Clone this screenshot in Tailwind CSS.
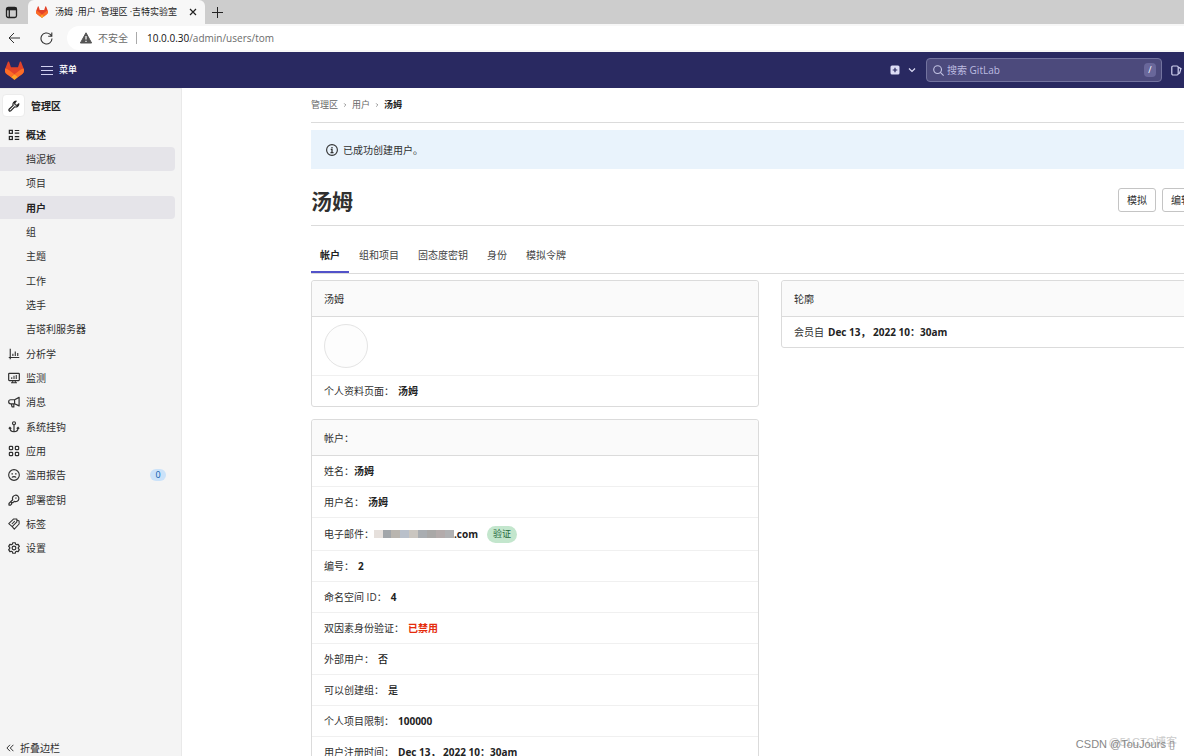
<!DOCTYPE html>
<html lang="zh-CN">
<head>
<meta charset="utf-8">
<meta name="viewport" content="width=device-width, initial-scale=1">
<title>汤姆 ·用户 ·管理区 ·吉特实验室</title>
<script src="https://cdn.jsdelivr.net/npm/@tailwindcss/browser@4"></script>
</head>
<body class="relative flex h-screen flex-col overflow-hidden bg-white font-['Open_Sans','Noto_Sans_CJK_SC',sans-serif] text-[10px] leading-4 text-[#303030]">

<svg class="hidden" aria-hidden="true">
  <symbol id="tanuki" viewBox="0 0 25 24">
    <path d="m24.507 9.5-.034-.09L21.082.562a.896.896 0 0 0-1.694.091l-2.29 7.01H7.825L5.535.653a.898.898 0 0 0-1.694-.09L.451 9.411.416 9.5a6.297 6.297 0 0 0 2.09 7.278l.012.01.03.022 5.16 3.867 2.56 1.935 1.554 1.176a1.051 1.051 0 0 0 1.268 0l1.555-1.176 2.56-1.935 5.197-3.89.014-.01A6.297 6.297 0 0 0 24.507 9.5Z" fill="#E24329"/>
    <path d="m24.507 9.5-.034-.09a11.44 11.44 0 0 0-4.56 2.051l-7.447 5.632 4.742 3.584 5.197-3.89.014-.01A6.297 6.297 0 0 0 24.507 9.5Z" fill="#FC6D26"/>
    <path d="m7.707 20.677 2.56 1.935 1.555 1.176a1.051 1.051 0 0 0 1.268 0l1.555-1.176 2.56-1.935-4.743-3.584-4.755 3.584Z" fill="#FCA326"/>
    <path d="M5.01 11.461a11.43 11.43 0 0 0-4.56-2.05L.416 9.5a6.297 6.297 0 0 0 2.09 7.278l.012.01.03.022 5.16 3.867 4.745-3.584-7.444-5.632Z" fill="#FC6D26"/>
  </symbol>
</svg>

<!-- Browser tabs -->
<div class="flex h-6 shrink-0 items-stretch bg-[#cdcdcd]">
  <button aria-label="标签操作" class="flex w-7 items-center pl-[5px] text-[#222]">
    <svg class="size-[13px]" viewBox="0 0 13 13" fill="none" stroke="currentColor" stroke-width="1.3"><rect x="1.5" y="1.5" width="10" height="10" rx="1.8"/><path d="M1.5 3h10" stroke-width="2.6"/><path d="M4.3 3v8.5"/></svg>
  </button>
  <div class="flex w-[177px] items-center rounded-t-md bg-[#f7f7f7] pl-2 pr-2 text-[9px] text-[#1a1a1a]">
    <svg class="size-3 shrink-0"><use href="#tanuki"/></svg>
    <span class="ml-[7px] flex-1 whitespace-nowrap">汤姆 ·用户 ·管理区 ·吉特实验室</span>
    <button aria-label="关闭标签"><svg class="size-2" viewBox="0 0 8 8" fill="none" stroke="#222" stroke-width="1.2"><path d="M1 1l6 6M7 1L1 7"/></svg></button>
  </div>
  <button aria-label="新建标签" class="flex items-center pl-[7px]"><svg class="size-[11px]" viewBox="0 0 11 11" fill="none" stroke="#222"><path d="M5.5 0v11M0 5.5h11"/></svg></button>
</div>

<!-- Address bar -->
<div class="flex h-7 shrink-0 items-center bg-[#f7f7f7] pl-2">
  <button aria-label="后退"><svg class="size-3" viewBox="0 0 12 12" fill="none" stroke="#333"><path d="M12 6H1M6 1L1 6l5 5"/></svg></button>
  <button aria-label="刷新" class="ml-5"><svg class="size-[13px]" viewBox="0 0 13 13" fill="none" stroke="#333" stroke-width="1.1"><path d="M12 6.5a5.5 5.5 0 1 1-1.8-4.1L11.6 4M11.8.5v3.7H8.2"/></svg></button>
  <div class="ml-[14px] flex h-6 flex-1 items-center rounded-l-full bg-white pl-[13px] text-[#6b6b6b]">
    <svg class="size-3" viewBox="0 0 12 12"><path d="M6 .8 11.6 11H.4z" fill="#555" stroke="#555" stroke-linejoin="round"/><path d="M6 4v3.6M6 8.7v1.2" stroke="#fff" stroke-width="1.2"/></svg>
    <span class="ml-1.5">不安全</span>
    <span class="mx-2 h-3 w-px bg-[#aaa]"></span>
    <div role="textbox" aria-label="地址" class="ml-0.5 text-[10px]"><span class="text-[#111]">10.0.0.30</span>/admin/users/tom</div>
  </div>
</div>

<!-- GitLab top bar -->
<header class="flex h-9 shrink-0 items-center overflow-hidden bg-[#292961] pl-[5px] text-[#d1d1f0]">
  <a href="#" aria-label="GitLab"><svg class="size-[19px]"><use href="#tanuki"/></svg></a>
  <button class="ml-[17px] flex items-center gap-1.5 font-medium text-white">
    <svg class="size-3" viewBox="0 0 12 12" stroke="#d1d1f0" fill="none"><path d="M0 2.5h12M0 6.5h12M0 10.5h12" stroke-width="1.1"/></svg>
    <span class="text-[9px]">菜单</span>
  </button>
  <button aria-label="新建" class="ml-auto flex items-center gap-2">
    <svg class="size-[10px]" viewBox="0 0 10 10"><rect x=".5" y=".5" width="9" height="9" rx="1.5" fill="#dcdcf5"/><path d="M5 2.7v4.6M2.7 5h4.6" stroke="#292961" stroke-width="1.2"/></svg>
    <svg class="size-2" viewBox="0 0 8 8" fill="none" stroke="#dcdcf5" stroke-width="1.2"><path d="M1 2.5l3 3 3-3"/></svg>
  </button>
  <div class="ml-[10px] flex h-6 w-[236px] items-center rounded border border-[#73739f] bg-[#4c4a7c] pl-1.5 pr-[5px]">
    <svg class="size-[11px] shrink-0" viewBox="0 0 11 11" fill="none" stroke="#c4c4e4" stroke-width="1.1"><circle cx="4.6" cy="4.6" r="3.9"/><path d="M7.4 7.4l3.2 3.2"/></svg>
    <input type="search" aria-label="搜索 GitLab" placeholder="搜索 GitLab" class="ml-[3px] h-5 min-w-0 flex-1 bg-transparent outline-none placeholder:text-[#bcbce0]">
    <kbd class="flex h-[14px] w-3 items-center justify-center rounded-sm bg-[#69679a] font-['Open_Sans',sans-serif] text-[9px] text-white">/</kbd>
  </div>
  <button aria-label="议题" class="ml-[9px] mr-[2px]"><svg class="size-[11px]" viewBox="0 0 11 11" fill="none" stroke="#d1d1f0" stroke-width="1.2"><rect x=".8" y="1" width="6.4" height="9" rx="1.2"/><path d="M7.4 2.2 10 3.6 8.6 8.2 7.4 8.8"/></svg></button>
</header>

<div class="flex min-h-0 flex-1 overflow-hidden">
  <!-- Sidebar -->
  <nav aria-label="管理区" class="flex w-[182px] shrink-0 flex-col overflow-hidden border-r border-t border-[#e9e9e9] bg-[#f4f4f4]">
    <a href="#" class="mt-[5px] ml-[2px] flex items-center gap-[6px] font-semibold text-[#222]">
      <span class="flex size-[23px] items-center justify-center rounded border border-[#ececec] bg-white">
        <svg class="size-3" viewBox="0 0 16 16" fill="none" stroke="currentColor" stroke-width="1.6" stroke-linejoin="round"><path d="M10.9 1.500A4.300 4.300 0 0 0 6.900 7.200L1.500 12.400a1.500 1.500 0 0 0 2.100 2.100L8.800 9.100a4.300 4.300 0 0 0 5.700-4L12 7.200 9.600 6.400 8.800 4z"/></svg>
      </span>管理区</a>
    <ul class="mt-[6px] grid h-[437px] shrink-0 auto-rows-fr gap-px pr-[6px] [&_a]:flex [&_a]:h-full [&_a]:items-center [&_a]:rounded-r [&_svg]:mr-[6px] [&_svg]:size-3 [&_svg]:shrink-0">
      <li><a href="#" class="pl-2 font-semibold text-[#222]"><svg viewBox="0 0 16 16" fill="none" stroke="currentColor" stroke-width="1.6"><rect x="1.8" y="1.8" width="4" height="4"/><rect x="1.8" y="10" width="4" height="4"/><path d="M9 2h6M9 5.6h6M9 10.2h6M9 13.8h6"/></svg>概述</a></li>
      <li><a href="#" class="bg-[#e5e4e9] pl-[26px]">挡泥板</a></li>
      <li><a href="#" class="pl-[26px]">项目</a></li>
      <li><a href="#" aria-current="page" class="bg-[#e5e4e9] pl-[26px] font-semibold text-[#222]">用户</a></li>
      <li><a href="#" class="pl-[26px]">组</a></li>
      <li><a href="#" class="pl-[26px]">主题</a></li>
      <li><a href="#" class="pl-[26px]">工作</a></li>
      <li><a href="#" class="pl-[26px]">选手</a></li>
      <li><a href="#" class="pl-[26px]">吉塔利服务器</a></li>
      <li><a href="#" class="pl-2"><svg viewBox="0 0 16 16" fill="none" stroke="currentColor" stroke-width="1.5"><path d="M3 1v14M1 12.6h14M6.5 7.5v3.2M9.7 4.5v6.2M13 6.5v4.2"/></svg>分析学</a></li>
      <li><a href="#" class="pl-2"><svg viewBox="0 0 16 16" fill="none" stroke="currentColor" stroke-width="1.6"><rect x=".9" y="1.8" width="14.2" height="9.6" rx="1"/><path d="M6.3 11.4v3M9.7 11.4v3M4 14.4h8M5 7v2.4M8 5v4.4M11 4v5.4" stroke-width="1.4"/></svg>监测</a></li>
      <li><a href="#" class="pl-2"><svg viewBox="0 0 16 16" fill="none" stroke="currentColor" stroke-width="1.6" stroke-linejoin="round"><path d="M14.8 1.8v11.4L8.8 10.4H3.6a2.6 2.6 0 0 1 0-5.4h5.2zM8.8 5v5.4M4.4 10.4l1 4.2h2.4V10.4"/></svg>消息</a></li>
      <li><a href="#" class="pl-2"><svg viewBox="0 0 16 16" fill="none" stroke="currentColor" stroke-width="1.6"><circle cx="8" cy="3" r="2"/><path d="M8 5v9.4M1 10.2 2.6 8.4 4.4 10.2M2.6 9c0 3.500 2.200 5.300 5.400 5.300s5.400-1.800 5.400-5.300M11.600 10.200 13.400 8.400 15 10.200"/></svg>系统挂钩</a></li>
      <li><a href="#" class="pl-2"><svg viewBox="0 0 16 16" fill="none" stroke="currentColor" stroke-width="1.6"><rect x="1.800" y="1.800" width="4.400" height="4.400" rx="1"/><rect x="9.800" y="1.800" width="4.400" height="4.400" rx="1"/><rect x="1.800" y="9.800" width="4.400" height="4.400" rx="1"/><rect x="9.800" y="9.800" width="4.400" height="4.400" rx="1"/></svg>应用</a></li>
      <li><a href="#" class="pl-2 pr-[9px]"><svg viewBox="0 0 16 16" fill="none" stroke="currentColor" stroke-width="1.500"><circle cx="8" cy="8" r="7.100"/><path d="M5.300 11.300c1-1.600 4.400-1.600 5.400 0M4.600 6.500h2M9.400 6.500h2"/></svg>滥用报告<span class="ml-auto flex h-3 w-4 items-center justify-center rounded-full bg-[#cbe2f9] text-[9px] text-[#0b5cad]">0</span></a></li>
      <li><a href="#" class="pl-2"><svg viewBox="0 0 16 16" fill="none" stroke="currentColor" stroke-width="1.600" stroke-linejoin="round"><path d="M6.300 7.700A4.300 4.300 0 1 1 8.400 9.800L6.600 11.600H4.800V13.400L3.400 14.800H1.300V12.700z"/><path d="M10 6l1.200-1.200"/></svg>部署密钥</a></li>
      <li><a href="#" class="pl-2"><svg viewBox="0 0 16 16" fill="none" stroke="currentColor" stroke-width="1.400" stroke-linejoin="round"><path d="M7.600 1.200h4.200v4L5.600 11.600 1 7.600zM11.800 2.600l3 1.400v4L8.400 14.800 5.600 11.600"/><path d="M5.200 8l3.800-3.800"/></svg>标签</a></li>
      <li><a href="#" class="pl-2"><svg viewBox="0 0 16 16" fill="none" stroke="currentColor" stroke-width="1.600" stroke-linejoin="round"><path d="M6.400 1h3.200l.6 1.900 1.300.7 2-.4 1.600 2.700L13.700 7.300v1.400l1.400 1.400-1.600 2.700-2-.4-1.300.7L9.600 15H6.400l-.6-1.900-1.300-.7-2 .4L.9 10.100l1.400-1.400V7.300L.9 5.900l1.600-2.700 2 .4 1.300-.7z"/><circle cx="8" cy="8" r="2.500"/></svg>设置</a></li>
    </ul>
    <button class="mt-auto flex items-center gap-[6px] pl-[6px]">
      <svg class="size-2" viewBox="0 0 8 8" fill="none" stroke="#333"><path d="M4 .8.9 4 4 7.200M7.400.8 4.300 4l3.100 3.200"/></svg>折叠边栏
    </button>
  </nav>

  <!-- Page content -->
  <main class="ml-[129px] min-w-[918px] flex-1 overflow-hidden">
    <nav aria-label="面包屑" class="flex h-[35px] items-center gap-[5px] border-b border-[#dbdbdb] text-[9px] text-[#666]">
      <a href="#">管理区</a>
      <svg class="size-1" viewBox="0 0 5 5" fill="none" stroke="#777"><path d="M1.500.5l2 2-2 2"/></svg>
      <a href="#">用户</a>
      <svg class="size-1" viewBox="0 0 5 5" fill="none" stroke="#777"><path d="M1.500.5l2 2-2 2"/></svg>
      <a href="#" class="font-semibold text-[#222]">汤姆</a>
    </nav>
    <div role="alert" class="mt-[7px] flex h-[39px] items-center gap-[5px] bg-[#e9f3fc] pl-[15px]">
      <svg class="size-3" viewBox="0 0 16 16" fill="none" stroke="#333" stroke-width="1.500"><circle cx="8" cy="8" r="7.200"/><path d="M6.300 7.300H8v4M6 11.600h4M8 4v1.700" stroke-width="1.700"/></svg>已成功创建用户。
    </div>
    <div class="flex h-[57px] items-center justify-between border-b border-[#dbdbdb] pr-[29px]">
      <h1 class="pt-2 text-[21px] leading-6 font-semibold text-[#303030]">汤姆</h1>
      <div class="flex gap-1.5 pt-[6px]">
        <button class="h-6 w-[38px] rounded-[3px] border border-[#c4c4c4]">模拟</button>
        <button class="h-6 w-[38px] rounded-[3px] border border-[#c4c4c4]">编辑</button>
      </div>
    </div>
    <div role="tablist" class="mt-3 flex h-9 items-stretch gap-px border-b border-[#dbdbdb] text-[#444]">
      <button role="tab" aria-selected="true" class="border-b-2 border-[#5252c9] px-[9px] font-semibold text-[#222]">帐户</button>
      <button role="tab" class="border-b-2 border-transparent px-[9px]">组和项目</button>
      <button role="tab" class="border-b-2 border-transparent px-[9px]">固态度密钥</button>
      <button role="tab" class="border-b-2 border-transparent px-[9px]">身份</button>
      <button role="tab" class="border-b-2 border-transparent px-[9px]">模拟令牌</button>
    </div>
    <div class="mt-[6px] grid grid-cols-2 items-start gap-[22px]">
      <div class="flex flex-col gap-3">
        <section class="rounded-[3px] border border-[#dbdbdb]">
          <h2 class="flex h-9 items-center rounded-t-[3px] border-b border-[#dbdbdb] bg-[#fafafa] px-3">汤姆</h2>
          <div class="flex h-[59px] items-center border-b border-[#f0f0f0] px-3"><span class="size-11 rounded-full border border-[#e4e4e4] bg-[#fdfdfd]"></span></div>
          <p class="flex h-[30px] items-center gap-1 px-3">个人资料页面：<b class="font-semibold text-[#222]">汤姆</b></p>
        </section>
        <section class="rounded-[3px] border border-[#dbdbdb]">
          <h2 class="flex h-9 items-center rounded-t-[3px] border-b border-[#dbdbdb] bg-[#fafafa] px-3">帐户：</h2>
          <ul class="[&_b]:font-bold [&_b]:text-[#222] [&>li]:flex [&>li]:h-[31px] [&>li]:items-center [&>li]:gap-1 [&>li]:border-b [&>li]:border-[#f0f0f0] [&>li]:px-3">
            <li class="!gap-0">姓名：<b>汤姆</b></li>
            <li>用户名：<b>汤姆</b></li>
            <li class="!h-[33px] !gap-0">电子邮件：<span class="h-2 w-[80px] bg-[linear-gradient(90deg,#e6e0dc_0_9px,#a2a6aa_9px_17px,#b9b5af_17px_26px,#b9c0ca_26px_35px,#cac6c0_35px_44px,#a9adb1_44px_53px,#a9a8a7_53px_62px,#b3abab_62px_71px,#b0b1b3_71px)]"></span><b>.com</b><span class="ml-[9px] flex h-[17px] items-center rounded-full bg-[#c3e6cd] px-1.5 text-[9px] text-[#24663b]">验证</span></li>
            <li>编号：<b>2</b></li>
            <li>命名空间 ID：<b>4</b></li>
            <li>双因素身份验证：<b class="!text-[#e52c0c]">已禁用</b></li>
            <li>外部用户：<b class="!font-medium">否</b></li>
            <li>可以创建组：<b class="!font-medium">是</b></li>
            <li>个人项目限制：<b>100000</b></li>
            <li>用户注册时间：<b>Dec 13， 2022 10：30am</b></li>
          </ul>
        </section>
      </div>
      <section class="rounded-[3px] border border-[#dbdbdb]">
        <h2 class="flex h-9 items-center rounded-t-[3px] border-b border-[#dbdbdb] bg-[#fafafa] px-3">轮廓</h2>
        <p class="flex h-[30px] items-center gap-1 px-3">会员自<b class="font-bold text-[#222]">Dec 13， 2022 10：30am</b></p>
      </section>
    </div>
  </main>
</div>

<!-- Watermarks -->
<div class="pointer-events-none absolute right-[7px] bottom-[6px] font-['Liberation_Sans','Noto_Sans_CJK_SC',sans-serif] text-[11px] text-[#ccc]">@51CTO博客</div>
<div class="pointer-events-none absolute right-[9px] bottom-1 font-['Liberation_Sans','DejaVu_Sans',sans-serif] text-[11px] text-[#888]">CSDN @TouJours ▯</div>
</body>
</html>
